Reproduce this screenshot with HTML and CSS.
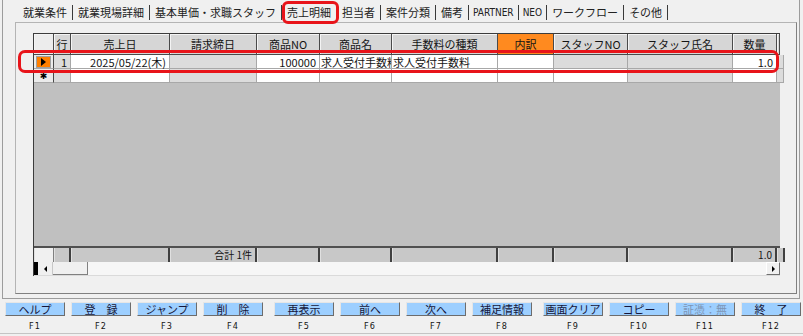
FILE: index.html
```html
<!DOCTYPE html>
<html lang="ja">
<head>
<meta charset="utf-8">
<title>売上明細</title>
<link rel="stylesheet" href="styles.css">
</head>
<body>
<div class="app">
  <div class="window">
    <div class="tabs">
      <span class="tab">就業条件</span>
      <span class="tab">就業現場詳細</span>
      <span class="tab">基本単価・求職スタッフ</span>
      <span class="tab active">売上明細</span>
      <span class="tab">担当者</span>
      <span class="tab">案件分類</span>
      <span class="tab">備考</span>
      <span class="tab latin">PARTNER</span>
      <span class="tab latin">NEO</span>
      <span class="tab">ワークフロー</span>
      <span class="tab">その他</span>
    </div>
    <div class="panel">
      <div class="grid">
        <div class="row head">
          <div class="c sel"></div>
          <div class="c">行</div>
          <div class="c">売上日</div>
          <div class="c">請求締日</div>
          <div class="c">商品NO</div>
          <div class="c">商品名</div>
          <div class="c">手数料の種類</div>
          <div class="c orange">内訳</div>
          <div class="c">スタッフNO</div>
          <div class="c">スタッフ氏名</div>
          <div class="c">数量</div>
          <div class="c"></div>
        </div>
        <div class="row data">
          <div class="c sel"><span class="cur"><span class="tri"></span></span></div>
          <div class="c g r">1</div>
          <div class="c r">2025/05/22(木)</div>
          <div class="c g"></div>
          <div class="c r">100000</div>
          <div class="c l">求人受付手数料</div>
          <div class="c l">求人受付手数料</div>
          <div class="c"></div>
          <div class="c g"></div>
          <div class="c g"></div>
          <div class="c r">1.0</div>
          <div class="c g"></div>
        </div>
        <div class="row data">
          <div class="c sel"><span class="star">✱</span></div>
          <div class="c g"></div>
          <div class="c"></div>
          <div class="c g"></div>
          <div class="c"></div>
          <div class="c"></div>
          <div class="c"></div>
          <div class="c"></div>
          <div class="c"></div>
          <div class="c g"></div>
          <div class="c"></div>
          <div class="c g"></div>
        </div>
        <div class="empty"></div>
        <div class="row foot">
          <div class="c sel"></div>
          <div class="c"></div>
          <div class="c"></div>
          <div class="c r">合計 1件</div>
          <div class="c"></div>
          <div class="c"></div>
          <div class="c"></div>
          <div class="c"></div>
          <div class="c"></div>
          <div class="c"></div>
          <div class="c r">1.0</div>
          <div class="c"></div>
        </div>
        <div class="hscroll">
          <span class="sb-edge"></span>
          <span class="sb-btn"><span class="arr-l"></span></span>
          <span class="sb-thumb"></span>
          <span class="sb-track"></span>
          <span class="sb-btn right"><span class="arr-r"></span></span>
        </div>
      </div>
    </div>
  </div>
  <div class="buttons">
    <div class="group">
      <div class="key"><span class="btn">ヘルプ</span><span class="fk">F1</span></div>
      <div class="key"><span class="btn">登　録</span><span class="fk">F2</span></div>
      <div class="key"><span class="btn">ジャンプ</span><span class="fk">F3</span></div>
      <div class="key"><span class="btn">削　除</span><span class="fk">F4</span></div>
    </div>
    <div class="group">
      <div class="key"><span class="btn">再表示</span><span class="fk">F5</span></div>
      <div class="key"><span class="btn">前へ</span><span class="fk">F6</span></div>
      <div class="key"><span class="btn">次へ</span><span class="fk">F7</span></div>
      <div class="key"><span class="btn">補足情報</span><span class="fk">F8</span></div>
    </div>
    <div class="group">
      <div class="key"><span class="btn">画面クリア</span><span class="fk">F9</span></div>
      <div class="key"><span class="btn">コピー</span><span class="fk">F10</span></div>
      <div class="key"><span class="btn disabled">証憑：無</span><span class="fk">F11</span></div>
      <div class="key"><span class="btn">終　了</span><span class="fk">F12</span></div>
    </div>
  </div>
  <div class="bottom-line"></div>
  <div class="hl hl-tab"></div>
  <div class="hl hl-row"></div>
</div>
</body>
</html>
```

FILE: styles.css
```css
* { box-sizing: border-box; margin: 0; padding: 0; }
html, body { width: 803px; height: 336px; overflow: hidden; }
body {
  background: #f0f0f0;
  font-family: "Noto Sans CJK JP", "Noto Sans", sans-serif;
  font-size: 11px;
  color: #141414;
}
.app { position: relative; width: 803px; height: 336px; }

.window {
  margin-left: 2px;
  width: 798px;
  height: 299px;
  border-left: 1px solid #9c9c9c;
  border-right: 1px solid #9c9c9c;
  border-bottom: 1px solid #9c9c9c;
}

.tabs {
  display: flex;
  height: 22px;
  padding: 5px 0 0 15px;
}
.tab {
  height: 15px;
  line-height: 15px;
  padding: 0 5px;
  border-right: 1px solid #3a3a3a;
  white-space: nowrap;
  color: #222;
}
.tab.latin {
  font-family: "Liberation Sans Narrow", "DejaVu Sans Condensed", sans-serif;
  font-size: 10px;
  padding: 0 4px;
}

.panel {
  margin-left: 12px;
  width: 782px;
  height: 272px;
  border-top: 1px solid #b4b4b4;
  border-left: 1px solid #b4b4b4;
  border-right: 1px solid #808080;
  border-bottom: 1px solid #808080;
  padding: 10px 0 0 17px;
}

.grid {
  width: 747px;
  height: 243px;
  display: flex;
  flex-direction: column;
  border-top: 1px solid #3c3c3c;
  border-left: 1px solid #3c3c3c;
}
.row {
  display: grid;
  grid-template-columns: 20px 17px 99px 87px 63px 72px 106px 56px 74px 105px 44px 3px;
}
.c {
  border-right: 1px solid #a8a8a8;
  border-bottom: 1px solid #a8a8a8;
  overflow-x: clip;
  overflow-y: visible;
  white-space: nowrap;
  padding: 0 3px;
}
.c.r { text-align: right; }
.c.l { text-align: left; padding-left: 1px; }

.head .c {
  height: 21px;
  line-height: 20px;
  text-align: center;
  background: #d6d6d6;
  border-right: 1px solid #4a4a4a;
  border-bottom: 1px solid #4a4a4a;
  box-shadow: inset 1px 1px 0 #f4f4f4;
  padding: 0;
}
.head .c.sel { background: #ececec; }
.head .c.orange { background: #ff8a1f; box-shadow: none; }

.data .c {
  height: 14px;
  line-height: 14px;
  background: #ffffff;
}
.data .c.g { background: #dcdcdc; }
.data .c.sel {
  background: #ebebeb;
  border-right: 1px solid #4a4a4a;
  padding: 0;
  display: flex;
  align-items: center;
  justify-content: center;
}
.cur {
  display: flex;
  align-items: center;
  justify-content: center;
  width: 15px;
  height: 12px;
  background: #ff7f00;
  border: 1px solid #a0a0a0;
}
.tri {
  width: 0;
  height: 0;
  border-top: 4px solid transparent;
  border-bottom: 4px solid transparent;
  border-left: 5px solid #000;
}
.star {
  font-family: "DejaVu Sans", sans-serif;
  font-size: 9px;
  line-height: 12px;
  color: #000;
}

.empty { flex: 1; background: #c0c0c0; }

.foot {
  border-top: 2px solid #505050;
}
.foot .c {
  height: 14px;
  line-height: 14px;
  font-size: 10px;
  background: #c8c8c8;
  border-right: 2px solid #404040;
  border-bottom: none;
  box-shadow: inset 1px 0 0 #e0e0e0;
}
.foot .c.sel { background: #f0f0f0; border-right: 1px solid #808080; }

.hscroll {
  height: 14px;
  display: flex;
  background: #f6f6f6;
  border-bottom: 1px solid #dadada;
}
.sb-edge { width: 4px; background: #000; }
.sb-btn {
  width: 15px;
  display: flex;
  align-items: center;
  justify-content: center;
  background: #f0f0f0;
  border-right: 1px solid #c8c8c8;
}
.sb-btn.right {
  width: 14px;
  border: 1px solid;
  border-color: #ffffff #707070 #707070 #ffffff;
}
.arr-l {
  border-top: 3px solid transparent;
  border-bottom: 3px solid transparent;
  border-right: 3px solid #000;
}
.arr-r {
  border-top: 3px solid transparent;
  border-bottom: 3px solid transparent;
  border-left: 3px solid #000;
}
.sb-thumb {
  width: 35px;
  background: #f0f0f0;
  border-right: 1px solid #808080;
  border-bottom: 1px solid #808080;
}
.sb-track { flex: 1; }

.buttons {
  display: flex;
  gap: 11px;
  padding: 3px 0 0 5px;
}
.group { display: flex; gap: 6px; }
.key { display: flex; flex-direction: column; align-items: center; width: 60px; }
.btn {
  width: 60px;
  height: 14px;
  line-height: 12px;
  text-align: center;
  background: #9dcfff;
  border: 1px solid;
  border-color: #e6e6e6 #6c6c6c #6c6c6c #e6e6e6;
  color: #16163a;
  font-size: 11px;
  white-space: nowrap;
}
.btn.disabled { color: #7c94b4; }
.fk {
  margin-top: 4px;
  height: 12px;
  line-height: 12px;
  font-family: "DejaVu Sans Condensed", "Liberation Sans Narrow", sans-serif;
  font-size: 9px;
  letter-spacing: 1px;
}

.bottom-line {
  margin-top: 1px;
  border-top: 1px solid #c4c4c4;
}

.hl {
  position: absolute;
  border: 3px solid #e8141a;
  pointer-events: none;
}
.hl-tab { left: 282px; top: 1px; width: 57px; height: 23px; border-radius: 6px; }
.hl-row { left: 18px; top: 50px; width: 761px; height: 23px; border-radius: 7px; }
```
